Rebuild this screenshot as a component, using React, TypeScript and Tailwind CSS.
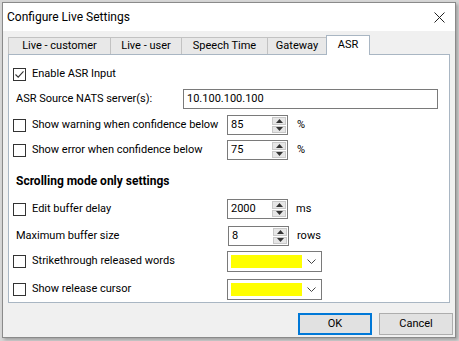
import React from "react";

const font = { fontFamily: 'Roboto, "Noto Sans", sans-serif' };

function Check({ checked = false }: { checked?: boolean }) {
  return (
    <div className="w-[13px] h-[13px] border border-[#333333] bg-white flex items-center justify-center shrink-0">
      {checked && (
        <svg width="11" height="11" viewBox="0 0 11 11">
          <path d="M1.5 5.5 L4.2 8.2 L9.5 2.3" fill="none" stroke="#333" strokeWidth="1.1" />
        </svg>
      )}
    </div>
  );
}

function Spinner({ value }: { value: string }) {
  return (
    <div className="w-[61px] h-[20px] border border-[#7a7a7a] bg-white flex items-stretch shrink-0">
      <div className="flex-1 pl-[3px] leading-[18px] text-black">{value}</div>
      <div className="w-[16px] flex flex-col p-[1px] gap-[1px]">
        <div className="flex-1 bg-[#e6e6e6] border border-[#c8c8c8] flex items-center justify-center">
          <svg width="7" height="4" viewBox="0 0 7 4"><path d="M0 4 L3.5 0 L7 4Z" fill="#333" /></svg>
        </div>
        <div className="flex-1 bg-[#e6e6e6] border border-[#c8c8c8] flex items-center justify-center">
          <svg width="7" height="4" viewBox="0 0 7 4"><path d="M0 0 L3.5 4 L7 0Z" fill="#333" /></svg>
        </div>
      </div>
    </div>
  );
}

function Combo() {
  return (
    <div className="w-[95px] h-[21px] border border-[#7a7a7a] bg-white flex items-center pl-[3px] shrink-0">
      <div className="w-[71px] h-[13px] bg-[#ffff00]" />
      <div className="flex-1 flex justify-center">
        <svg width="9" height="6" viewBox="0 0 9 6"><path d="M0.5 0.5 L4.5 4.5 L8.5 0.5" fill="none" stroke="#444" strokeWidth="1" /></svg>
      </div>
    </div>
  );
}

function Tab({ label, w, selected = false }: { label: string; w: string; selected?: boolean }) {
  if (selected) {
    return (
      <div className={`${w} h-[20px] -mb-[1px] bg-white border border-b-0 border-[#a9b6c3] flex items-center justify-center text-black z-10 whitespace-nowrap`}>
        {label}
      </div>
    );
  }
  return (
    <div className={`${w} h-[17px] bg-[#e8e8e8] border border-b-0 border-[#c2c2c2] -mr-[1px] flex items-center justify-center text-black whitespace-nowrap`}>
      {label}
    </div>
  );
}

export default function App() {
  return (
    <div className="w-[459px] h-[341px] bg-[#d6d6d6] pt-[2px] pl-[2px] text-[11px] whitespace-nowrap" style={font}>
      <div className="w-[454px] h-[336px] border border-[#8a8a8a] bg-[#f0f0f0] flex flex-col shadow-[2px_2px_3px_rgba(0,0,0,0.25)]">
        {/* title bar */}
        <div className="h-[28px] bg-white flex items-center justify-between pl-[4px] pr-[10px]">
          <span className="text-[12px] text-black">Configure Live Settings</span>
          <svg width="11" height="11" viewBox="0 0 11 11">
            <path d="M0.5 0.5 L10.5 10.5 M10.5 0.5 L0.5 10.5" stroke="#222" strokeWidth="1" />
          </svg>
        </div>
        {/* tabs */}
        <div className="pl-[5px] mt-[3px] flex items-end h-[20px]">
          <Tab label="Live - customer" w="w-[103px]" />
          <Tab label="Live - user" w="w-[72px]" />
          <Tab label="Speech Time" w="w-[87px]" />
          <Tab label="Gateway" w="w-[60px]" />
          <Tab label="ASR" w="w-[44px]" selected />
        </div>
        {/* panel */}
        <div className="ml-[5px] w-[442px] h-[249px] border border-[#a9b6c3] bg-white text-black flex flex-col">
          <div className="mt-[9px] h-[20px] flex items-center pl-[4px] gap-[6px]">
            <Check checked />
            <span>Enable ASR Input</span>
          </div>
          <div className="mt-[5px] h-[20px] flex items-center pl-[7px]">
            <span className="w-[167px]">ASR Source NATS server(s):</span>
            <div className="w-[255px] h-[20px] border border-[#7a7a7a] pl-[3px] leading-[18px]">10.100.100.100</div>
          </div>
          <div className="mt-[6px] h-[20px] flex items-center pl-[4px]">
            <Check />
            <span className="ml-[6px] w-[195px]">Show warning when confidence below</span>
            <Spinner value="85" />
            <span className="ml-[9px]">%</span>
          </div>
          <div className="mt-[5px] h-[20px] flex items-center pl-[4px]">
            <Check />
            <span className="ml-[6px] w-[195px]">Show error when confidence below</span>
            <Spinner value="75" />
            <span className="ml-[9px]">%</span>
          </div>
          <div className="mt-[11px] h-[20px] flex items-center pl-[7px] font-bold text-[12px]">
            Scrolling mode only settings
          </div>
          <div className="mt-[8px] h-[20px] flex items-center pl-[4px]">
            <Check />
            <span className="ml-[6px] w-[195px]">Edit buffer delay</span>
            <Spinner value="2000" />
            <span className="ml-[8px]">ms</span>
          </div>
          <div className="mt-[7px] h-[20px] flex items-center pl-[7px]">
            <span className="w-[212px]">Maximum buffer size</span>
            <Spinner value="8" />
            <span className="ml-[8px]">rows</span>
          </div>
          <div className="mt-[5px] h-[21px] flex items-center pl-[4px]">
            <Check />
            <span className="ml-[6px] w-[195px]">Strikethrough released words</span>
            <Combo />
          </div>
          <div className="mt-[7px] h-[21px] flex items-center pl-[4px]">
            <Check />
            <span className="ml-[6px] w-[195px]">Show release cursor</span>
            <Combo />
          </div>
        </div>
        {/* buttons */}
        <div className="flex justify-end gap-[7px] pr-[2px] mt-[10px]">
          <div className="w-[74px] h-[22px] border-2 border-[#0078d7] bg-[#e1e1e1] flex items-center justify-center text-black">OK</div>
          <div className="w-[74px] h-[22px] border border-[#adadad] bg-[#e1e1e1] flex items-center justify-center text-black">Cancel</div>
        </div>
      </div>
    </div>
  );
}
